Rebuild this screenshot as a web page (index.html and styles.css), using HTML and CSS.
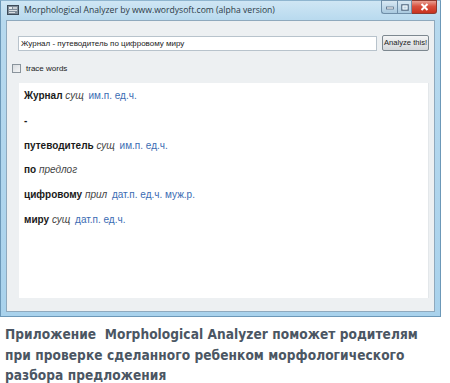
FILE: index.html
```html
<!DOCTYPE html>
<html>
<head>
<meta charset="utf-8">
<link rel="stylesheet" href="styles.css">
</head>
<body>
<div class="window">
  <div class="titlebar">
    <div class="title">
      <svg class="appicon" width="12" height="10" viewBox="0 0 12 10">
        <rect x="0.5" y="0.5" width="11" height="9" fill="#7f8c99" stroke="#3d4a57"/>
        <rect x="2" y="2" width="3" height="2" fill="#e6e9ec"/>
        <rect x="6" y="2" width="4" height="2" fill="#c9ced3"/>
        <rect x="2" y="5" width="8" height="1" fill="#d9dde1"/>
        <rect x="2" y="7" width="6" height="1" fill="#d9dde1"/>
      </svg>
      <span>Morphological Analyzer by www.wordysoft.com (alpha version)</span>
    </div>
    <div class="controls">
      <div class="btn min"><svg width="8" height="6" viewBox="0 0 8 6"><rect x="0.5" y="3" width="7" height="2" fill="#fff" stroke="#5a6f86" stroke-width="0.8"/></svg></div>
      <div class="btn max"><svg width="8" height="7" viewBox="0 0 8 7"><rect x="0.8" y="0.8" width="6.4" height="5.4" fill="none" stroke="#5a6f86" stroke-width="1.2"/><rect x="2" y="2" width="4" height="3" fill="none" stroke="#fff" stroke-width="0.8"/></svg></div>
      <div class="btn close"><svg width="9" height="8" viewBox="0 0 9 8"><path d="M1.5 1 L7.5 7 M7.5 1 L1.5 7" stroke="#fff" stroke-width="2"/></svg></div>
    </div>
  </div>
  <div class="client">
    <div class="inputrow">
      <div class="textbox">Журнал - путеводитель по цифровому миру</div>
      <div class="button">Analyze this!</div>
    </div>
    <div class="checkrow">
      <span class="checkbox"></span>
      <span class="checklabel">trace words</span>
    </div>
    <div class="results">
      <div class="line"><b>Журнал</b> <i>сущ</i> <span class="gram">им.п. ед.ч.</span></div>
      <div class="line"><b>-</b></div>
      <div class="line"><b>путеводитель</b> <i>сущ</i> <span class="gram">им.п. ед.ч.</span></div>
      <div class="line"><b>по</b> <i>предлог</i></div>
      <div class="line"><b>цифровому</b> <i>прил</i> <span class="gram">дат.п. ед.ч. муж.р.</span></div>
      <div class="line"><b>миру</b> <i>сущ</i> <span class="gram">дат.п. ед.ч.</span></div>
    </div>
  </div>
</div>
<p class="caption">Приложение&nbsp; Morphological Analyzer поможет родителям<br>при проверке сделанного ребенком морфологического<br>разбора предложения</p>
</body>
</html>
```
FILE: styles.css
```css
html, body {
  margin: 0;
  padding: 0;
  background: #ffffff;
}
body {
  width: 450px;
  height: 383px;
  overflow: hidden;
  font-family: "Liberation Sans", Arial, sans-serif;
}
.window {
  width: 441px;
  box-sizing: border-box;
  background: linear-gradient(180deg, #cfe6f4 0%, #b7d9ee 20px, #a9d2ec 100%);
  border: 1px solid #6c98b8;
  border-top-color: #8fb5cf;
  padding: 0 5px 4px 5px;
}
.titlebar {
  height: 19px;
  display: flex;
  align-items: flex-start;
  justify-content: space-between;
}
.title {
  display: flex;
  align-items: center;
  gap: 5px;
  height: 17px;
  padding-left: 1px;
  font-family: "Open Sans", "DejaVu Sans", sans-serif;
  font-size: 8.6px;
  color: #2d3a46;
}
.appicon { display: block; }
.controls {
  display: flex;
  margin-right: -2px;
  margin-top: -1px;
}
.btn {
  height: 14px;
  display: flex;
  align-items: center;
  justify-content: center;
  box-sizing: border-box;
  border: 1px solid #6f8ea8;
}
.btn.min {
  width: 16px;
  border-radius: 0 0 0 3px;
  background: linear-gradient(180deg, #d8e8f3, #a9c9df);
  border-right: none;
}
.btn.max {
  width: 15px;
  background: linear-gradient(180deg, #d8e8f3, #a9c9df);
}
.btn.close {
  width: 25px;
  border-radius: 0 0 3px 0;
  border-left: none;
  border-color: #8e3a30;
  background: linear-gradient(180deg, #e9a093 0%, #d9503e 45%, #c8321f 100%);
}
.client {
  background: #edf0f2;
  border: 1px solid #8fa9bd;
  height: 292px;
  box-sizing: border-box;
  padding: 14px 5px 13px 5px;
  display: flex;
  flex-direction: column;
}
.inputrow {
  display: flex;
  align-items: center;
  gap: 5px;
  padding-left: 6px;
}
.textbox {
  width: 360px;
  height: 15px;
  box-sizing: border-box;
  background: #ffffff;
  border: 1px solid #b8c3cc;
  font-size: 8px;
  line-height: 13px;
  padding-left: 2px;
  color: #222;
}
.button {
  width: 47px;
  height: 16px;
  box-sizing: border-box;
  border: 1px solid #7d8890;
  border-radius: 2px;
  background: linear-gradient(180deg, #f4f5f6 0%, #e4e6e8 50%, #d6d9dc 100%);
  font-size: 7.6px;
  line-height: 14px;
  text-align: center;
  color: #222;
}
.checkrow {
  display: flex;
  align-items: center;
  gap: 5px;
  margin-top: 13px;
}
.checkbox {
  width: 9px;
  height: 9px;
  box-sizing: border-box;
  border: 1px solid #8a949c;
  background: linear-gradient(135deg, #d9dde0, #f4f5f6);
}
.checklabel {
  font-size: 8px;
  color: #222;
}
.results {
  margin: 10px 0 0 7px;
  background: #ffffff;
  flex: 1;
  padding: 6px 0 0 5px;
  border-right: 1px solid #e3e7ea;
}
.line {
  height: 24.8px;
  line-height: 14px;
  font-size: 10px;
  color: #1a1a1a;
}
.line b {
  font-weight: bold;
}
.line i {
  color: #444;
  font-style: italic;
}
.gram {
  color: #3b6cb3;
  margin-left: 2px;
}
.caption {
  margin: 7px 0 0 5px;
  white-space: nowrap;
  font-family: "DejaVu Sans Condensed", "DejaVu Sans", sans-serif;
  font-stretch: condensed;
  font-weight: bold;
  font-size: 13.6px;
  line-height: 20.5px;
  letter-spacing: 0.05px;
  color: #4b5663;
}
```
